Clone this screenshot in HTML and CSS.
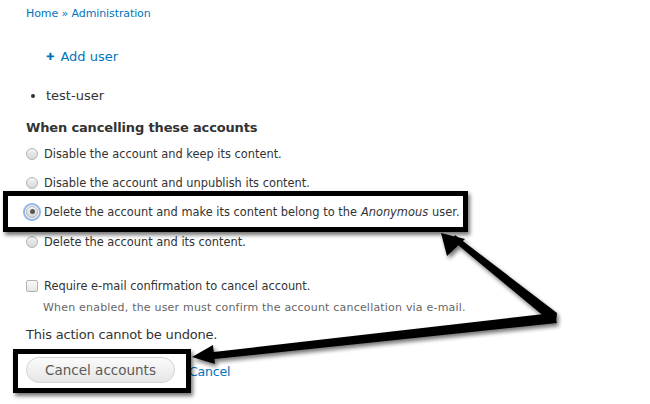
FILE: index.html
```html
<!DOCTYPE html>
<html>
<head>
<meta charset="utf-8">
<link rel="stylesheet" href="styles.css">
</head>
<body>
<div class="page">
  <div class="breadcrumb"><a href="#">Home</a> » <a href="#">Administration</a></div>
  <ul class="action-links">
    <li><a href="#"><span class="plus">✚</span>Add user</a></li>
  </ul>
  <ul class="accounts">
    <li>test-user</li>
  </ul>
  <div class="fieldset">
    <div class="legend">When cancelling these accounts</div>
    <label class="option"><input type="radio" name="m"> Disable the account and keep its content.</label>
    <label class="option"><input type="radio" name="m"> Disable the account and unpublish its content.</label>
    <label class="option"><input type="radio" name="m" checked class="focused"> Delete the account and make its content belong to the <em>Anonymous</em> user.</label>
    <label class="option"><input type="radio" name="m"> Delete the account and its content.</label>
  </div>
  <label class="option check"><input type="checkbox"> Require e-mail confirmation to cancel account.</label>
  <div class="description">When enabled, the user must confirm the account cancellation via e-mail.</div>
  <p class="warning">This action cannot be undone.</p>
  <div class="form-actions">
    <button class="button">Cancel accounts</button>
    <a href="#" class="cancel">Cancel</a>
  </div>

  <div class="hl hl-option"></div>
  <div class="hl hl-button"></div>
  <svg class="arrows" width="650" height="404" viewBox="0 0 650 404">
    <defs>
      <filter id="sh" x="-10%" y="-10%" width="120%" height="130%">
        <feGaussianBlur in="SourceAlpha" stdDeviation="2"/>
        <feOffset dx="2" dy="3" result="b"/>
        <feComponentTransfer><feFuncA type="linear" slope="0.55"/></feComponentTransfer>
        <feMerge><feMergeNode/><feMergeNode in="SourceGraphic"/></feMerge>
      </filter>
    </defs>
    <g filter="url(#sh)" fill="#000">
      <polygon points="452,240 455,235 557,313 556,323 552,323"/>
      <polygon points="553,313 557,323 205,360 205,353"/>
      <polygon points="441,233 465,239 447,256"/>
      <polygon points="192,357 213,345 215,364"/>
    </g>
  </svg>
</div>
</body>
</html>
```
FILE: styles.css
```css
html, body {
  margin: 0;
  padding: 0;
  background: #fff;
}
body {
  font-family: "DejaVu Sans", Verdana, sans-serif;
  color: #333;
}
.page {
  position: relative;
  width: 650px;
  height: 404px;
  overflow: hidden;
  padding-left: 26px;
  box-sizing: border-box;
}
a {
  color: #0074bd;
  text-decoration: none;
}
.breadcrumb {
  padding-top: 7px;
  font-size: 11px;
  line-height: 14px;
  color: #0074bd;
  letter-spacing: -0.1px;
}
.action-links {
  list-style: none;
  margin: 27px 0 0 0;
  padding: 0 0 0 20px;
  font-size: 13px;
  line-height: 18px;
}
.plus {
  display: inline-block;
  font-size: 10px;
  margin-right: 6px;
  vertical-align: 1px;
}
.accounts {
  margin: 21px 0 0 0;
  padding: 0 0 0 20px;
  font-size: 13px;
  line-height: 18px;
}
.fieldset {
  margin-top: 14px;
}
.legend {
  font-weight: bold;
  font-size: 13px;
  line-height: 18px;
  letter-spacing: -0.15px;
}
.option {
  display: flex;
  align-items: center;
  height: 29px;
  font-size: 11.4px;
  white-space: nowrap;
}
.fieldset .legend + .option {
  margin-top: 2px;
}
.fieldset .option:last-child {
  height: 30px;
  padding-top: 1px;
  box-sizing: border-box;
}
.option input {
  -webkit-appearance: none;
  appearance: none;
  margin: 0 6px 0 0;
  width: 12px;
  height: 12px;
  border: 1px solid #b4b4b4;
  border-radius: 50%;
  background: linear-gradient(#f4f4f4, #d6d6d6);
  box-sizing: border-box;
  position: relative;
  flex: none;
}
.option input.focused {
  box-shadow: 0 0 0 1px #fff, 0 0 0 3px #8fb4e6;
  border-radius: 50%;
}
.option input[type="radio"]:checked::after {
  content: "";
  position: absolute;
  left: 2.5px;
  top: 2.5px;
  width: 5px;
  height: 5px;
  border-radius: 50%;
  background: #555;
}
.option input[type="checkbox"] {
  border-radius: 2px;
  width: 12px;
  height: 12px;
  background: linear-gradient(#fafafa, #e4e4e4);
}
.option em {
  margin: 0 4px;
}
.check {
  margin-top: 15px;
}
.description {
  padding-left: 17px;
  font-size: 11px;
  line-height: 14px;
  color: #666;
  margin-top: 1px;
  letter-spacing: 0.2px;
}
.warning {
  margin: 11px 0 0 0;
  font-size: 13px;
  line-height: 18px;
  letter-spacing: -0.2px;
}
.form-actions {
  display: flex;
  align-items: center;
  margin-top: 13px;
}
.button {
  font-family: "DejaVu Sans", Verdana, sans-serif;
  font-size: 13.5px;
  color: #5a5a5a;
  height: 26px;
  width: 149px;
  border: 1px solid #d4d4d4;
  border-radius: 13px;
  background: linear-gradient(#fbfbfb, #e6e6e6);
  padding: 0;
}
.cancel {
  margin-left: 14px;
  font-size: 12.5px;
  letter-spacing: -0.15px;
  padding-top: 2px;
}
.hl {
  position: absolute;
  border: 5px solid #000;
  box-shadow: 2px 3px 4px rgba(0,0,0,0.55);
  box-sizing: border-box;
}
.hl-option {
  left: 3px;
  top: 191px;
  width: 465px;
  height: 41px;
}
.hl-button {
  left: 13px;
  top: 349px;
  width: 178px;
  height: 44px;
}
.arrows {
  position: absolute;
  left: 0;
  top: 0;
}
```
